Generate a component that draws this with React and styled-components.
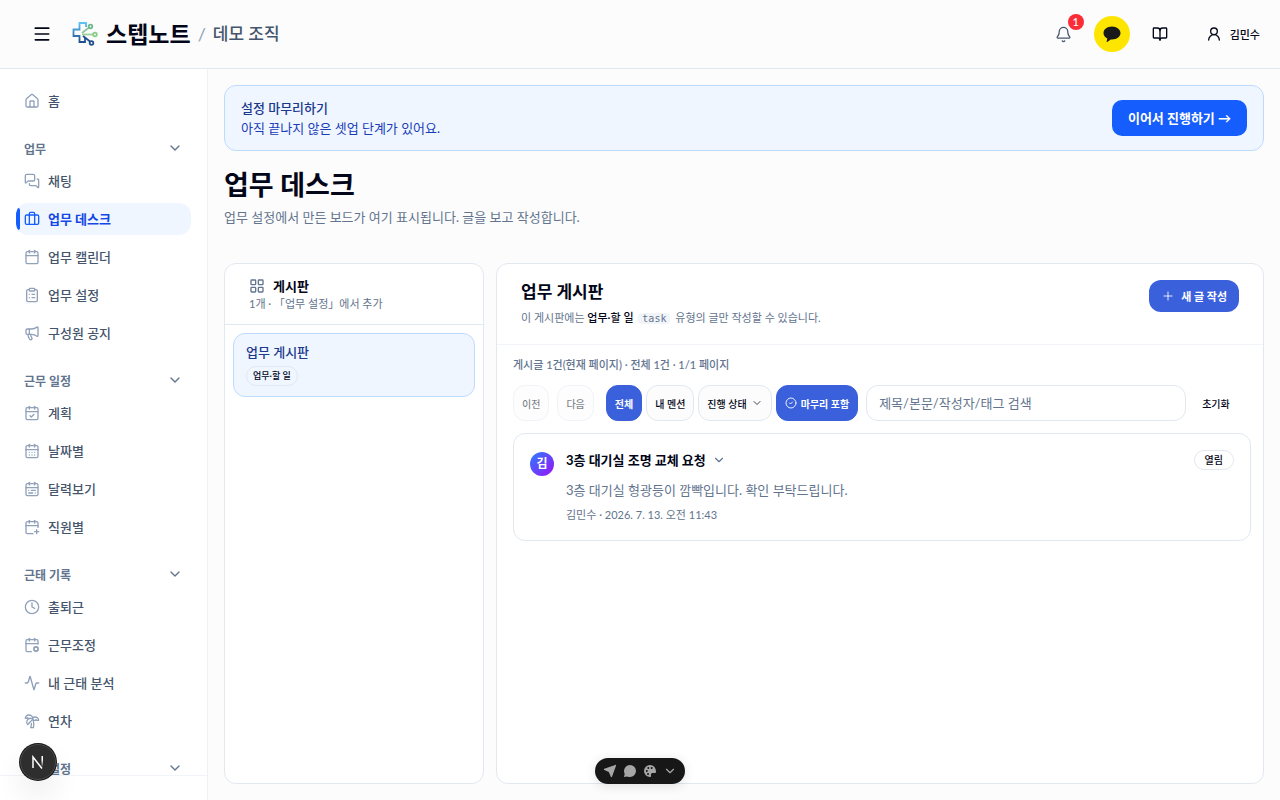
import styled, { createGlobalStyle } from 'styled-components';
import {
  Activity,
  Bell,
  BookOpen,
  Briefcase,
  Calendar,
  CalendarCheck,
  CalendarCog,
  CalendarDays,
  CalendarPlus,
  CalendarRange,
  ChevronDown,
  CircleCheck,
  ClipboardList,
  Clock,
  House,
  LayoutGrid,
  Megaphone,
  Menu,
  MessagesSquare,
  Plus,
  TreePalm,
  UserRound,
} from 'lucide-react';

const GlobalStyle = createGlobalStyle`
  *, *::before, *::after {
    box-sizing: border-box;
  }
  body {
    margin: 0;
    background-color: #fcfcfc;
    color: #020618;
    font-family: Lato, 'Noto Sans CJK KR', sans-serif;
    font-size: 13px;
    line-height: 20px;
  }
  h1, h2, h3, p, ul {
    margin: 0;
    padding: 0;
  }
  ul {
    list-style: none;
  }
  button, input {
    font-family: inherit;
  }
  button {
    cursor: pointer;
  }
  svg {
    flex-shrink: 0;
  }
`;

const Page = styled.div`
  display: flex;
  flex-direction: column;
  height: 100vh;
`;

const Header = styled.header`
  display: flex;
  align-items: center;
  justify-content: space-between;
  flex-shrink: 0;
  padding: 16px 20px 16px 24px;
  border-bottom: 1px solid #e2e8f0;
`;

const HeaderSide = styled.div`
  display: flex;
  align-items: center;
  gap: ${({ $gap }) => $gap};
`;

const IconButton = styled.button`
  position: relative;
  display: flex;
  align-items: center;
  justify-content: center;
  width: 36px;
  height: 36px;
  padding: 0;
  border: none;
  border-radius: 50%;
  background-color: ${({ $bg }) => $bg || 'transparent'};
  color: ${({ $color }) => $color || '#020618'};
`;

const CountBadge = styled.span`
  position: absolute;
  top: -2px;
  right: -2px;
  width: 16px;
  height: 16px;
  border-radius: 50%;
  background-color: #fb2c36;
  color: #ffffff;
  font-size: 11px;
  font-weight: 500;
  line-height: 16px;
  text-align: center;
`;

const Brand = styled.a`
  display: flex;
  align-items: center;
  gap: 8px;
  color: #020618;
  font-size: 23px;
  font-weight: 700;
  line-height: 36px;
  text-decoration: none;
`;

const Slash = styled.span`
  color: #90a1b9;
  font-size: 18px;
`;

const OrgName = styled.span`
  color: #45556c;
  font-size: 17px;
  font-weight: 500;
`;

const UserButton = styled.button`
  display: flex;
  align-items: center;
  gap: 8px;
  margin-left: 16px;
  padding: 8px 0;
  border: none;
  background: none;
  color: #020618;
  font-size: 11px;
  font-weight: 500;
`;

const Body = styled.div`
  display: flex;
  flex: 1;
  min-height: 0;
`;

const Sidebar = styled.aside`
  display: flex;
  flex-direction: column;
  flex-shrink: 0;
  width: 208px;
  border-right: 1px solid #f1f1f3;
  background-color: #ffffff;
`;

const Nav = styled.nav`
  flex: 1;
  min-height: 0;
  overflow: hidden;
  padding: 16px;
`;

const SidebarFooter = styled.div`
  height: 25px;
  border-top: 1px solid #f1f5f9;
`;

const NavList = styled.ul`
  display: flex;
  flex-direction: column;
  gap: 6px;
`;

const NavLink = styled.a`
  position: relative;
  display: flex;
  align-items: center;
  gap: 8px;
  height: 32px;
  padding: 0 8px;
  border-radius: 12px;
  overflow: hidden;
  background-color: ${({ $active }) => ($active ? '#eff6ff' : 'transparent')};
  color: ${({ $active }) => ($active ? '#1447e6' : '#45556c')};
  font-weight: ${({ $active }) => ($active ? 700 : 500)};
  text-decoration: none;
  svg {
    color: ${({ $active }) => ($active ? '#155dfc' : '#90a1b9')};
  }
  &::before {
    content: '';
    display: ${({ $active }) => ($active ? 'block' : 'none')};
    position: absolute;
    top: 5px;
    bottom: 5px;
    left: 0;
    width: 4px;
    border-radius: 4px;
    background-color: #155dfc;
  }
`;

const GroupButton = styled.button`
  display: flex;
  align-items: center;
  justify-content: space-between;
  width: 100%;
  height: 30px;
  margin: 16px 0 2px;
  padding: 0 8px;
  border: none;
  background: none;
  color: #62748e;
  font-size: 12px;
  font-weight: 700;
`;

const Main = styled.main`
  display: flex;
  flex-direction: column;
  flex: 1;
  min-width: 0;
  padding: 16px;
`;

const Banner = styled.section`
  display: flex;
  align-items: center;
  justify-content: space-between;
  padding: 12px 16px;
  border: 1px solid #bedbff;
  border-radius: 12px;
  background-color: #eff6ff;
  color: #193cb8;
  h2 {
    color: #1c398e;
    font-size: 13px;
    font-weight: 500;
  }
`;

const BannerLink = styled.a`
  padding: 8px 16px;
  border-radius: 10px;
  background-color: #155dfc;
  color: #ffffff;
  font-weight: 700;
  text-decoration: none;
`;

const PageTitle = styled.div`
  margin: 16px 0 36px;
  color: #62748e;
  h1 {
    margin-bottom: 4px;
    color: #020618;
    font-size: 27px;
    font-weight: 700;
    line-height: 36px;
  }
`;

const Panels = styled.div`
  display: grid;
  grid-template-columns: 260px minmax(0, 1fr);
  gap: 12px;
  flex: 1;
  min-height: 0;
`;

const Panel = styled.section`
  border: 1px solid #e2e8f0;
  border-radius: 12px;
  background-color: #ffffff;
`;

const BoardsHeader = styled.header`
  padding: 12px 24px;
  border-bottom: 1px solid #e2e8f0;
  color: #62748e;
  font-size: 11px;
  line-height: 16px;
  h2 {
    display: flex;
    align-items: center;
    gap: 8px;
    color: #020618;
    font-size: 13px;
    font-weight: 700;
    line-height: 20px;
  }
  svg {
    color: #62748e;
  }
`;

const BoardItem = styled.button`
  display: flex;
  flex-direction: column;
  align-items: flex-start;
  gap: 4px;
  width: calc(100% - 16px);
  margin: 8px;
  padding: 8px 12px 10px;
  border: 1px solid #bedbff;
  border-radius: 12px;
  background-color: #eff6ff;
  color: #1c398e;
  font-size: 13px;
  font-weight: 500;
  line-height: 20px;
`;

const Tag = styled.span`
  padding: 1px ${({ $wide }) => ($wide ? '10px' : '6px')};
  border: 1px solid #e2e8f0;
  border-radius: 10px;
  color: #020618;
  font-size: ${({ $wide }) => ($wide ? '10px' : '9px')};
  font-weight: 500;
  line-height: 16px;
`;

const PostsHeader = styled.header`
  display: flex;
  align-items: flex-start;
  justify-content: space-between;
  padding: 16px 24px;
  border-bottom: 1px solid #f1f5f9;
  color: #62748e;
  font-size: 11px;
  h2 {
    margin-bottom: 4px;
    color: #020618;
    font-size: 17px;
    font-weight: 700;
    line-height: 24px;
  }
  strong {
    color: #020618;
    font-weight: 500;
  }
  code {
    margin: 0 2px;
    padding: 0 4px;
    border-radius: 4px;
    background-color: #f1f5f9;
    font-family: 'DejaVu Sans Mono', monospace;
    font-size: 10px;
    line-height: 12px;
  }
`;

const NewPostButton = styled.button`
  display: flex;
  align-items: center;
  gap: 6px;
  height: 32px;
  padding: 0 12px;
  border: none;
  border-radius: 12px;
  background-color: #3b60dc;
  color: #ffffff;
  font-size: 11px;
  font-weight: 700;
`;

const PostsBody = styled.div`
  padding: 10px 12px 16px 16px;
`;

const Summary = styled.p`
  color: #62748e;
  font-size: 11px;
  font-weight: 500;
`;

const Toolbar = styled.div`
  display: flex;
  align-items: center;
  gap: 8px;
  margin: 10px 0 12px;
`;

const Filters = styled.div`
  display: flex;
  gap: 4px;
  margin-left: 4px;
`;

const FilterButton = styled.button`
  display: flex;
  align-items: center;
  gap: 4px;
  height: 36px;
  padding: 0 8px;
  border: 1px solid ${({ $on }) => ($on ? '#3b60dc' : '#e2e8f0')};
  border-radius: 12px;
  background-color: ${({ $on }) => ($on ? '#3b60dc' : '#fcfcfc')};
  color: ${({ $on }) => ($on ? '#ffffff' : '#020618')};
  font-size: 10px;
  font-weight: ${({ $on }) => ($on ? 700 : 500)};
  white-space: nowrap;
  &:disabled {
    opacity: 0.5;
  }
`;

const SearchInput = styled.input`
  width: 320px;
  height: 36px;
  padding: 0 12px;
  border: 1px solid #e2e8f0;
  border-radius: 12px;
  background-color: #ffffff;
  font-size: 13px;
  &::placeholder {
    color: #62748e;
    opacity: 1;
  }
`;

const ResetButton = styled.button`
  padding: 8px;
  border: none;
  background: none;
  color: #020618;
  font-size: 10px;
  font-weight: 500;
`;

const PostCard = styled.article`
  display: flex;
  align-items: flex-start;
  gap: 12px;
  padding: 16px;
  border: 1px solid #e2e8f0;
  border-radius: 12px;
`;

const Avatar = styled.span`
  width: 24px;
  height: 24px;
  margin-top: 2px;
  border-radius: 50%;
  background: linear-gradient(135deg, #2b7fff, #9810fa);
  color: #ffffff;
  font-size: 12px;
  font-weight: 700;
  line-height: 24px;
  text-align: center;
`;

const PostContent = styled.div`
  flex: 1;
  color: #62748e;
  h3 {
    display: flex;
    align-items: center;
    gap: 6px;
    color: #020618;
    font-size: 13px;
    font-weight: 700;
  }
  p {
    margin-top: 10px;
  }
  svg {
    color: #62748e;
  }
`;

const PostMeta = styled.div`
  margin-top: 6px;
  font-size: 11px;
  line-height: 18px;
`;

const DevBadge = styled.button`
  position: fixed;
  bottom: 20px;
  left: 20px;
  display: flex;
  align-items: center;
  justify-content: center;
  width: 36px;
  height: 36px;
  padding: 0;
  border: 1px solid #4a4a4a;
  border-radius: 50%;
  background-color: #2e2e2e;
  box-shadow: 0 0 0 1px #171717, 0 16px 32px -8px rgba(0, 0, 0, 0.24);
`;

const DevToolbar = styled.div`
  position: fixed;
  bottom: 16px;
  left: 50%;
  display: flex;
  align-items: center;
  gap: 6px;
  height: 26px;
  padding: 0 8px;
  border-radius: 13px;
  background-color: #171717;
  box-shadow: 0 2px 12px rgba(0, 0, 0, 0.12);
  transform: translateX(-50%);
  button {
    display: flex;
    padding: 0;
    border: none;
    background: none;
    color: #a6a6a6;
  }
`;

const navGroups = [
  {
    title: '업무',
    items: [
      { label: '채팅', icon: MessagesSquare },
      { label: '업무 데스크', icon: Briefcase, active: true },
      { label: '업무 캘린더', icon: Calendar },
      { label: '업무 설정', icon: ClipboardList },
      { label: '구성원 공지', icon: Megaphone },
    ],
  },
  {
    title: '근무 일정',
    items: [
      { label: '계획', icon: CalendarCheck },
      { label: '날짜별', icon: CalendarDays },
      { label: '달력보기', icon: CalendarRange },
      { label: '직원별', icon: CalendarPlus },
    ],
  },
  {
    title: '근태 기록',
    items: [
      { label: '출퇴근', icon: Clock },
      { label: '근무조정', icon: CalendarCog },
      { label: '내 근태 분석', icon: Activity },
      { label: '연차', icon: TreePalm },
    ],
  },
  { title: '조직 설정', items: [] },
];

const Logo = () => (
  <svg width="26" height="26" viewBox="0 0 26 26" fill="none" strokeWidth="1.800">
    <defs>
      <linearGradient id="cross" x1="0" y1="0" x2="0" y2="1">
        <stop offset="0" stopColor="#5cc3f5" />
        <stop offset="1" stopColor="#1f4e8f" />
      </linearGradient>
    </defs>
    <path
      d="M14 6V2H7.500V8.500H1.500V15H7.500V21H13V17"
      stroke="url(#cross)"
    />
    <path d="M10 12L17 6.500" stroke="#8cc79a" />
    <circle cx="18.500" cy="5.500" r="1.800" stroke="#6dbb8c" />
    <path d="M10 13.500H21" stroke="#9dd09a" />
    <circle cx="23" cy="13.500" r="1.800" stroke="#8ccb87" />
    <path d="M11 15L18 20.500" stroke="#1f4e8f" />
    <circle cx="19.500" cy="22" r="1.800" stroke="#1f4e8f" />
  </svg>
);

const TalkIcon = () => (
  <svg width="18" height="18" viewBox="0 0 18 18" fill="#191919">
    <path d="M9 1.500C4.200 1.500.5 4.400.5 8c0 2.300 1.500 4.300 3.800 5.500L3.600 16.600c-.1.400.3.600.6.400l3.600-2.500c.4 0 .8.100 1.200.1 4.800 0 8.500-2.900 8.500-6.500S13.800 1.500 9 1.500z" />
  </svg>
);

const NavItem = ({ label, icon: Icon, active }) => (
  <li>
    <NavLink href="#" $active={active}>
      <Icon size={16} />
      {label}
    </NavLink>
  </li>
);

const App = () => {
  return (
    <Page>
      <GlobalStyle />
      <Header>
        <HeaderSide $gap="12px">
          <IconButton aria-label="메뉴">
            <Menu size={20} />
          </IconButton>
          <HeaderSide $gap="7px">
            <Brand href="#">
              <Logo />
              스텝노트
            </Brand>
            <Slash>/</Slash>
            <OrgName>데모 조직</OrgName>
          </HeaderSide>
        </HeaderSide>
        <HeaderSide $gap="12px">
          <IconButton aria-label="알림" $color="#45556c">
            <Bell size={17} strokeWidth={1.8} />
            <CountBadge>1</CountBadge>
          </IconButton>
          <IconButton aria-label="카카오톡" $bg="#fee500">
            <TalkIcon />
          </IconButton>
          <IconButton aria-label="가이드">
            <BookOpen size={16} />
          </IconButton>
          <UserButton>
            <UserRound size={16} />
            김민수
          </UserButton>
        </HeaderSide>
      </Header>
      <Body>
        <Sidebar>
          <Nav>
            <NavList>
              <NavItem label="홈" icon={House} />
            </NavList>
            {navGroups.map(({ title, items }) => (
              <div key={title}>
                <GroupButton>
                  {title}
                  <ChevronDown size={16} />
                </GroupButton>
                <NavList>
                  {items.map((item) => (
                    <NavItem key={item.label} {...item} />
                  ))}
                </NavList>
              </div>
            ))}
          </Nav>
          <SidebarFooter />
        </Sidebar>
        <Main>
          <Banner>
            <div>
              <h2>설정 마무리하기</h2>
              <p>아직 끝나지 않은 셋업 단계가 있어요.</p>
            </div>
            <BannerLink href="#">이어서 진행하기 →</BannerLink>
          </Banner>
          <PageTitle>
            <h1>업무 데스크</h1>
            <p>업무 설정에서 만든 보드가 여기 표시됩니다. 글을 보고 작성합니다.</p>
          </PageTitle>
          <Panels>
            <Panel>
              <BoardsHeader>
                <h2>
                  <LayoutGrid size={16} />
                  게시판
                </h2>
                <p>1개 · 「업무 설정」에서 추가</p>
              </BoardsHeader>
              <BoardItem>
                업무 게시판
                <Tag>업무·할 일</Tag>
              </BoardItem>
            </Panel>
            <Panel>
              <PostsHeader>
                <div>
                  <h2>업무 게시판</h2>
                  <p>
                    이 게시판에는 <strong>업무·할 일</strong> <code>task</code>{' '}
                    유형의 글만 작성할 수 있습니다.
                  </p>
                </div>
                <NewPostButton>
                  <Plus size={14} strokeWidth={1.5} />새 글 작성
                </NewPostButton>
              </PostsHeader>
              <PostsBody>
                <Summary>게시글 1건(현재 페이지) · 전체 1건 · 1/1 페이지</Summary>
                <Toolbar>
                  <FilterButton disabled>이전</FilterButton>
                  <FilterButton disabled>다음</FilterButton>
                  <Filters>
                    <FilterButton $on>전체</FilterButton>
                    <FilterButton>내 멘션</FilterButton>
                    <FilterButton>
                      진행 상태
                      <ChevronDown size={12} strokeWidth={1.5} />
                    </FilterButton>
                    <FilterButton $on>
                      <CircleCheck size={12} strokeWidth={1.8} />
                      마무리 포함
                    </FilterButton>
                  </Filters>
                  <SearchInput
                    type="search"
                    aria-label="검색"
                    placeholder="제목/본문/작성자/태그 검색"
                  />
                  <ResetButton>초기화</ResetButton>
                </Toolbar>
                <PostCard>
                  <Avatar>김</Avatar>
                  <PostContent>
                    <h3>
                      3층 대기실 조명 교체 요청
                      <ChevronDown size={14} />
                    </h3>
                    <p>3층 대기실 형광등이 깜빡입니다. 확인 부탁드립니다.</p>
                    <PostMeta>김민수 · 2026. 7. 13. 오전 11:43</PostMeta>
                  </PostContent>
                  <Tag $wide>열림</Tag>
                </PostCard>
              </PostsBody>
            </Panel>
          </Panels>
        </Main>
      </Body>
      <DevBadge aria-label="개발 도구">
        <svg width="14" height="14" viewBox="0 0 14 14" fill="none" strokeWidth="1.500">
          <defs>
            <linearGradient id="fade" x1="0" y1="0" x2="0" y2="1">
              <stop offset="0.400" stopColor="#ffffff" />
              <stop offset="1" stopColor="#ffffff" stopOpacity="0.200" />
            </linearGradient>
          </defs>
          <path d="M2 13V2L11 13.500" stroke="#ffffff" />
          <rect x="10.500" y="1" width="1.500" height="10" fill="url(#fade)" />
        </svg>
      </DevBadge>
      <DevToolbar>
        <button aria-label="보내기">
          <svg width="14" height="14" viewBox="0 0 14 14" fill="currentColor">
            <path d="M12.200.9L1.300 4.800c-.6.200-.6 1 0 1.200l4.500 1.900 2 4.800c.2.600 1 .6 1.200 0l4-11c.2-.5-.3-1-.8-.8z" />
          </svg>
        </button>
        <button aria-label="댓글">
          <svg width="14" height="14" viewBox="0 0 14 14" fill="currentColor">
            <path d="M7 1a6 6 0 0 1 0 12c-1 0-1.900-.2-2.700-.6L1 13l.7-3.200A6 6 0 0 1 7 1z" />
          </svg>
        </button>
        <button aria-label="테마">
          <svg width="14" height="14" viewBox="0 0 14 14">
            <path
              fill="currentColor"
              d="M7 1a6 6 0 1 0 0 12c.9 0 1.300-.7 1-1.500-.4-1.200.2-2.500 1.500-2.500H12c.7 0 1-.6 1-1.500C13 3.800 10.300 1 7 1z"
            />
            <g fill="#171717">
              <circle cx="3.800" cy="7" r="1" />
              <circle cx="5.300" cy="4" r="1" />
              <circle cx="8.700" cy="4" r="1" />
              <circle cx="5" cy="10" r="1" />
            </g>
          </svg>
        </button>
        <button aria-label="접기">
          <ChevronDown size={14} />
        </button>
      </DevToolbar>
    </Page>
  );
};

export default App;
